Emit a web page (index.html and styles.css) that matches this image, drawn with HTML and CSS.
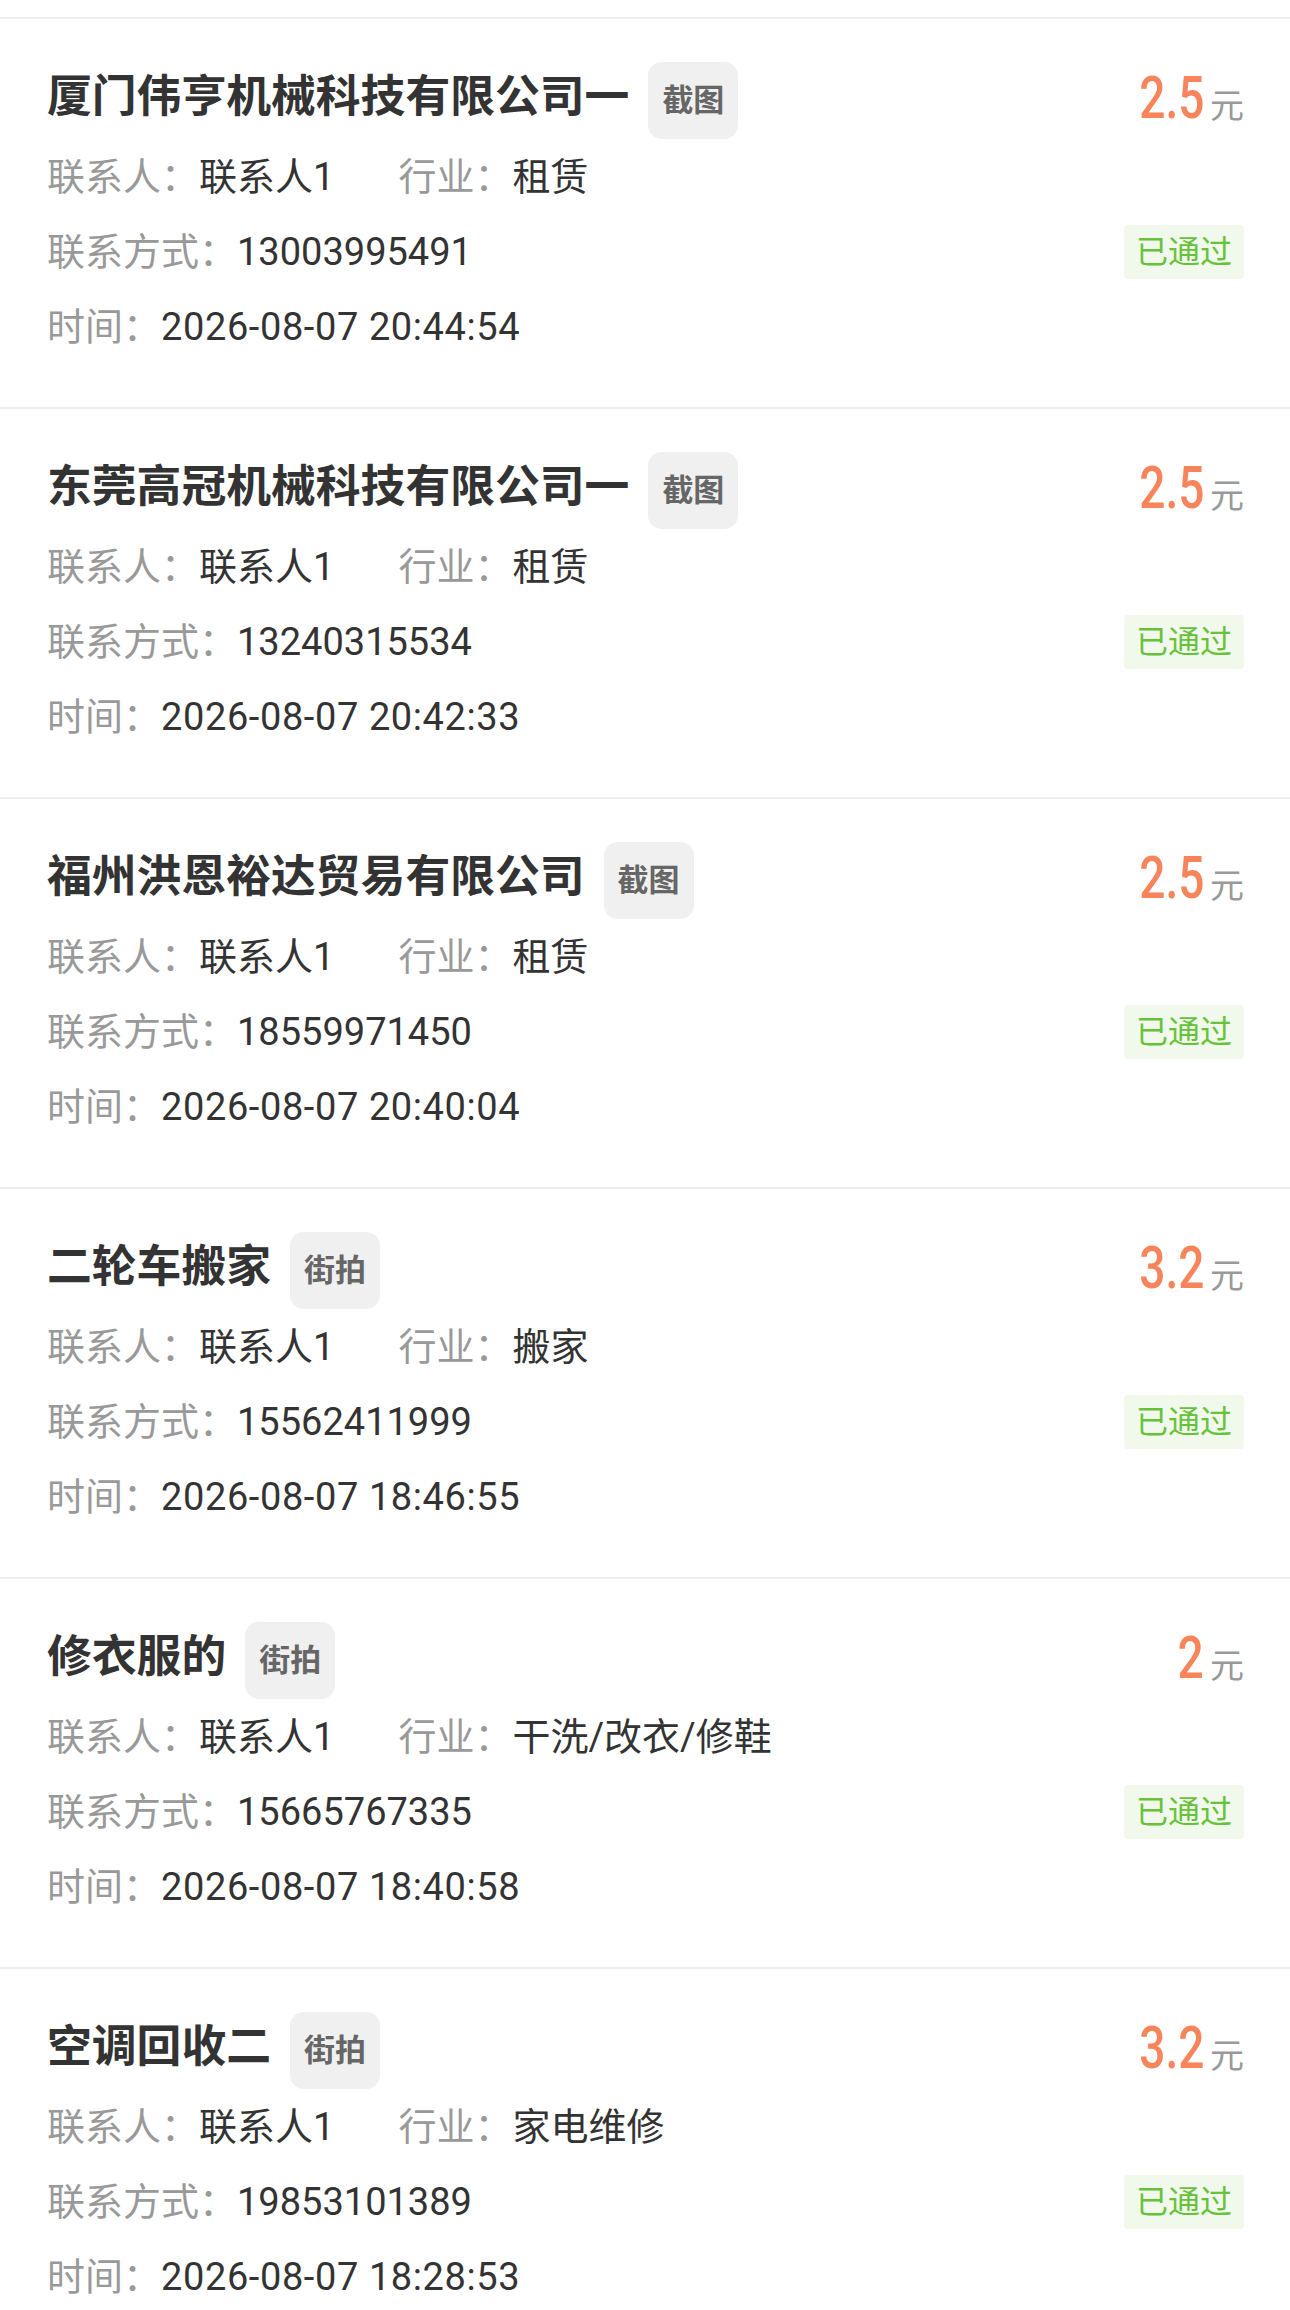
FILE: index.html
```html
<!DOCTYPE html>
<html lang="zh-CN">
<head>
<meta charset="utf-8">
<title>审核记录</title>
<link rel="stylesheet" href="styles.css">
</head>
<body>
<div class="list">

  <div class="card">
    <div class="row head">
      <div class="title-wrap"><span class="title">厦门伟亨机械科技有限公司一</span><span class="tag">截图</span></div>
      <div class="price"><span class="num">2.5</span><span class="unit">元</span></div>
    </div>
    <div class="row"><span class="label">联系人：</span><span class="value">联系人1</span><span class="label ind">行业：</span><span class="value">租赁</span></div>
    <div class="row"><span class="label">联系方式：</span><span class="value">13003995491</span><span class="status">已通过</span></div>
    <div class="row"><span class="label">时间：</span><span class="value time">2026-08-07 20:44:54</span></div>
  </div>

  <div class="card">
    <div class="row head">
      <div class="title-wrap"><span class="title">东莞高冠机械科技有限公司一</span><span class="tag">截图</span></div>
      <div class="price"><span class="num">2.5</span><span class="unit">元</span></div>
    </div>
    <div class="row"><span class="label">联系人：</span><span class="value">联系人1</span><span class="label ind">行业：</span><span class="value">租赁</span></div>
    <div class="row"><span class="label">联系方式：</span><span class="value">13240315534</span><span class="status">已通过</span></div>
    <div class="row"><span class="label">时间：</span><span class="value time">2026-08-07 20:42:33</span></div>
  </div>

  <div class="card">
    <div class="row head">
      <div class="title-wrap"><span class="title">福州洪恩裕达贸易有限公司</span><span class="tag">截图</span></div>
      <div class="price"><span class="num">2.5</span><span class="unit">元</span></div>
    </div>
    <div class="row"><span class="label">联系人：</span><span class="value">联系人1</span><span class="label ind">行业：</span><span class="value">租赁</span></div>
    <div class="row"><span class="label">联系方式：</span><span class="value">18559971450</span><span class="status">已通过</span></div>
    <div class="row"><span class="label">时间：</span><span class="value time">2026-08-07 20:40:04</span></div>
  </div>

  <div class="card">
    <div class="row head">
      <div class="title-wrap"><span class="title">二轮车搬家</span><span class="tag">街拍</span></div>
      <div class="price"><span class="num">3.2</span><span class="unit">元</span></div>
    </div>
    <div class="row"><span class="label">联系人：</span><span class="value">联系人1</span><span class="label ind">行业：</span><span class="value">搬家</span></div>
    <div class="row"><span class="label">联系方式：</span><span class="value">15562411999</span><span class="status">已通过</span></div>
    <div class="row"><span class="label">时间：</span><span class="value time">2026-08-07 18:46:55</span></div>
  </div>

  <div class="card">
    <div class="row head">
      <div class="title-wrap"><span class="title">修衣服的</span><span class="tag">街拍</span></div>
      <div class="price"><span class="num">2</span><span class="unit">元</span></div>
    </div>
    <div class="row"><span class="label">联系人：</span><span class="value">联系人1</span><span class="label ind">行业：</span><span class="value">干洗/改衣/修鞋</span></div>
    <div class="row"><span class="label">联系方式：</span><span class="value">15665767335</span><span class="status">已通过</span></div>
    <div class="row"><span class="label">时间：</span><span class="value time">2026-08-07 18:40:58</span></div>
  </div>

  <div class="card">
    <div class="row head">
      <div class="title-wrap"><span class="title">空调回收二</span><span class="tag">街拍</span></div>
      <div class="price"><span class="num">3.2</span><span class="unit">元</span></div>
    </div>
    <div class="row"><span class="label">联系人：</span><span class="value">联系人1</span><span class="label ind">行业：</span><span class="value">家电维修</span></div>
    <div class="row"><span class="label">联系方式：</span><span class="value">19853101389</span><span class="status">已通过</span></div>
    <div class="row"><span class="label">时间：</span><span class="value time">2026-08-07 18:28:53</span></div>
  </div>

</div>
</body>
</html>
```

FILE: styles.css
```css
html, body {
  margin: 0;
  padding: 0;
  background: #ffffff;
}

body {
  font-family: Roboto, "Noto Sans CJK SC", sans-serif;
  color: #333333;
}

.list {
  padding-top: 17px;
}

.card {
  border-top: 2px solid #ececec;
  padding: 43px 46px 43px 47px;
  height: 302px;
  box-sizing: content-box;
}

.row {
  display: flex;
  align-items: center;
  height: 75px;
  font-size: 38px;
  line-height: 1;
  white-space: nowrap;
}

.row.head {
  height: 77px;
  justify-content: space-between;
}

.title-wrap {
  display: flex;
  align-items: center;
}

.title {
  font-size: 44.8px;
  font-weight: 700;
  color: #333333;
  line-height: 1;
  margin-top: -6px;
}

.tag {
  margin-left: 19px;
  height: 77px;
  padding: 0 14px;
  border-radius: 14px;
  background: #f0f0f0;
  color: #666666;
  font-size: 31px;
  font-weight: 700;
  display: flex;
  align-items: center;
}

.price {
  display: flex;
  align-items: baseline;
  margin-top: -6px;
}

.num {
  display: inline-block;
  font-family: Roboto, sans-serif;
  font-size: 59px;
  font-weight: 500;
  color: #f7845a;
  transform: scaleX(0.78);
  transform-origin: right center;
  line-height: 1;
}

.unit {
  font-size: 34px;
  color: #999999;
  margin-left: 6px;
}

.label {
  color: #999999;
}

.value {
  color: #333333;
}

.time {
  letter-spacing: 0.6px;
}

.ind {
  margin-left: 64px;
}

.status {
  margin-left: auto;
  height: 54px;
  padding: 0 12px;
  border-radius: 4px;
  background: #f0f9eb;
  color: #67c23a;
  font-size: 32px;
  display: flex;
  align-items: center;
}
```
